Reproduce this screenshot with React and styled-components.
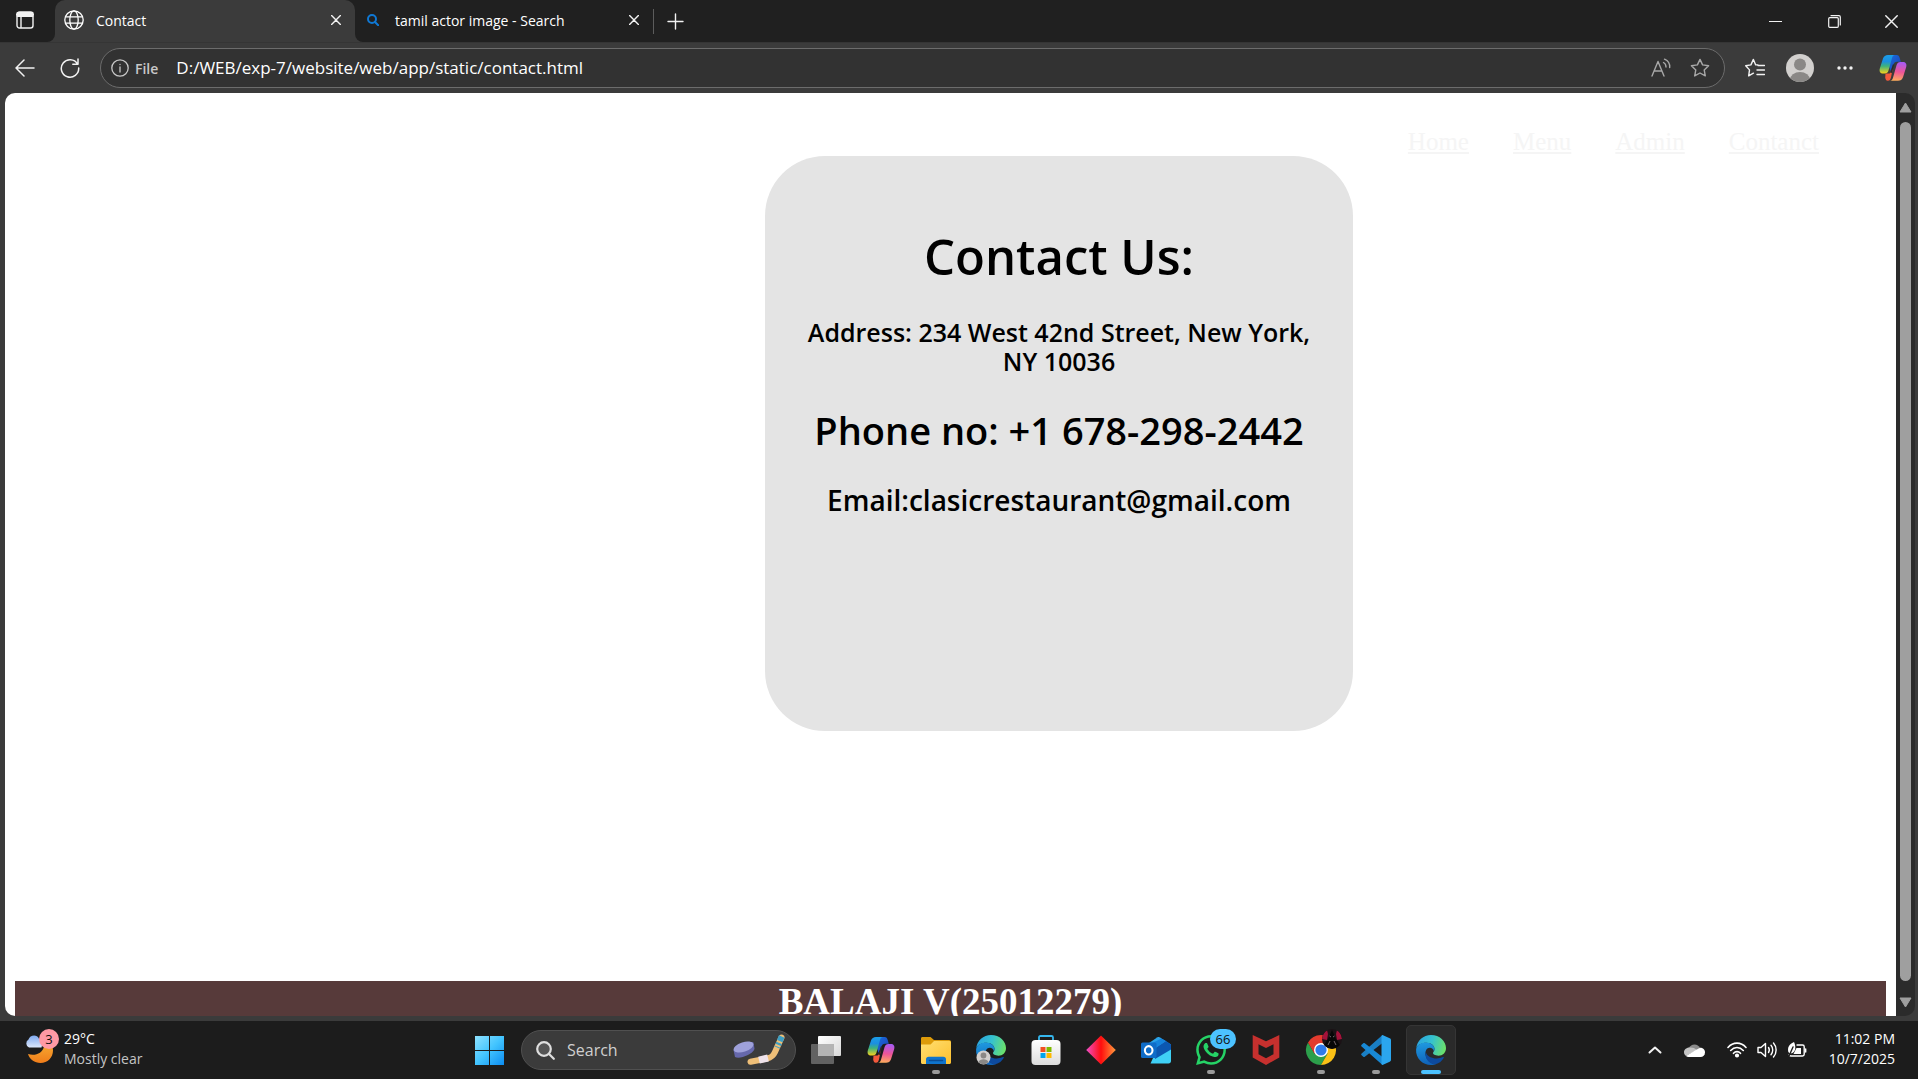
import React from "react";
import styled, { createGlobalStyle } from "styled-components";

const GlobalStyle = createGlobalStyle`
  *, *::before, *::after { box-sizing: border-box; }
  body { margin: 0; background: #3b3b3b; }
  button, input { font: inherit; color: inherit; }
`;

const ui = `"Segoe UI", "Open Sans", "Noto Sans", sans-serif`;

const Desktop = styled.div`
  display: flex;
  flex-direction: column;
  height: 100vh;
  overflow: hidden;
  font-family: ${ui};
  color: #fff;
  background: #3b3b3b;
`;

/* ---------- shared controls ---------- */
const IconButton = styled.button`
  display: flex;
  align-items: center;
  justify-content: center;
  flex: none;
  width: ${(p) => p.$w || 32}px;
  height: ${(p) => p.$h || 32}px;
  padding: 0;
  border: 0;
  background: none;
  color: ${(p) => p.$color || "#f2f2f2"};
  svg { display: block; }
`;

/* ---------- tab strip ---------- */
const TabStrip = styled.header`
  display: flex;
  align-items: center;
  flex: none;
  height: 42px;
  background: #202020;
`;

const TabActions = styled.div`
  display: flex;
  align-items: center;
  justify-content: center;
  align-self: stretch;
  width: 55px;
  padding: 0 6px 2px 0;
  background: #202020;
  border-bottom-right-radius: 8px;
`;

const Tab = styled.div`
  display: flex;
  align-items: center;
  align-self: stretch;
  width: ${(p) => p.$w}px;
  padding: 0 3px 2px ${(p) => p.$pad}px;
  gap: ${(p) => p.$gap}px;
  font-size: 14px;
  background: ${(p) => (p.$active ? "#3b3b3b" : "#202020")};
  border-radius: ${(p) => (p.$active ? "10px 10px 0 0" : "0 0 0 8px")};
`;

const Corner = styled.div`
  display: flex;
  align-self: stretch;
  background: linear-gradient(#202020 50%, #3b3b3b 50%);
`;

const TabTitle = styled.span`
  flex: 1;
  white-space: nowrap;
`;

const Separator = styled.div`
  width: 1px;
  height: 25px;
  background: #5c5c5c;
`;

const Spacer = styled.div`
  flex: 1;
`;

/* ---------- toolbar ---------- */
const Toolbar = styled.div`
  display: flex;
  align-items: center;
  flex: none;
  height: 51px;
  padding-left: 8px;
  border-top: 1px solid #353535;
`;

const AddressBar = styled.div`
  display: flex;
  align-items: center;
  flex: 1;
  height: 40px;
  margin: 0 7px 0 2px;
  padding: 0 4px 0 8px;
  border: 1px solid #6c6c6c;
  border-radius: 20px;
  background: #323232;
`;

const Scheme = styled.label`
  margin: 0 18px 0 4px;
  font-size: 14px;
  font-weight: 600;
  color: #c8c8c8;
`;

const AddressInput = styled.input`
  flex: 1;
  min-width: 0;
  padding: 0;
  border: 0;
  outline: 0;
  background: none;
  font-size: 17px;
  line-height: 24px;
`;

/* ---------- viewport ---------- */
const Viewport = styled.div`
  display: flex;
  flex: 1;
  min-height: 0;
  margin: 0 3px 5px 5px;
`;

const Page = styled.main`
  flex: 1;
  min-width: 0;
  overflow: hidden;
  padding: 34px 10px 0;
  border-radius: 10px 0 0 10px;
  background: #fff;
  color: #000;
  font-family: "Times New Roman", "Liberation Serif", serif;
`;

const Nav = styled.nav`
  display: flex;
  justify-content: flex-end;
  gap: 44px;
  padding-right: 67px;
  font-size: 25px;
  line-height: 29px;
  a { color: #f5f5f5; text-underline-offset: 2px; text-decoration-thickness: 2px; }
`;

const CardRow = styled.div`
  display: grid;
  grid-template-columns: 750fr 588px 533fr;
`;

const Card = styled.section`
  grid-column: 2;
  min-height: 575px;
  padding: 70px 40px;
  border-radius: 60px;
  background: #e4e4e4;
  text-align: center;
  font-family: "Trebuchet MS", "Open Sans", sans-serif;
`;

const CardLine = styled.p`
  margin: 0 0 ${(p) => p.$gap}px;
  font-size: ${(p) => p.$size}px;
  line-height: ${(p) => p.$line}px;
  font-weight: 600;
  white-space: ${(p) => (p.$nowrap ? "nowrap" : "normal")};
`;

const Footer = styled.footer`
  margin-top: 250px;
  padding-bottom: 20px;
  background: #573a3a;
  color: #fff;
  text-align: center;
  font-size: 37px;
  line-height: 42px;
  font-weight: 700;
`;

const ScrollTrack = styled.div`
  display: flex;
  flex-direction: column;
  align-items: center;
  width: 19px;
  padding: 9px 0 8px;
  border-radius: 0 10px 10px 0;
  background: #2b2b2b;
`;

const ScrollThumb = styled.div`
  flex: 1;
  width: 11px;
  margin: 9px 0 16px;
  border-radius: 6px;
  background: #9f9f9f;
`;

/* ---------- taskbar ---------- */
const Taskbar = styled.footer`
  display: grid;
  grid-template-columns: 1fr auto 1fr;
  align-items: center;
  flex: none;
  height: 58px;
  background: #1c1c1c;
`;

const Weather = styled.button`
  display: flex;
  align-items: center;
  justify-self: start;
  gap: 4px;
  height: 50px;
  margin-left: 24px;
  padding: 0 0 2px;
  border: 0;
  background: none;
  text-align: left;
  font-size: 14px;
  line-height: 20px;
  white-space: nowrap;
  small { display: block; font-size: 14px; color: #c4c4c4; }
`;

const Apps = styled.div`
  display: flex;
  align-items: center;
  gap: 5px;
  padding-left: 2px;
`;

const SearchBox = styled.label`
  display: flex;
  align-items: center;
  width: 275px;
  height: 40px;
  margin-left: 2px;
  padding: 0 10px 0 14px;
  gap: 12px;
  border: 1px solid #505050;
  border-radius: 20px;
  background: #3b3b3b;
`;

const SearchInput = styled.input`
  flex: 1;
  min-width: 0;
  padding: 0;
  border: 0;
  outline: 0;
  background: none;
  font-size: 16px;
  &::placeholder { color: #cfcfcf; opacity: 1; }
`;

const AppTile = styled.button`
  position: relative;
  display: flex;
  align-items: center;
  justify-content: center;
  width: 50px;
  height: 50px;
  padding: 0;
  border: 1px solid ${(p) => (p.$active ? "#353535" : "transparent")};
  border-radius: 5px;
  background: ${(p) => (p.$active ? "#2a2a2a" : "none")};
  svg { display: block; overflow: visible; }
  &::after {
    content: "";
    display: ${(p) => (p.$running || p.$active ? "block" : "none")};
    position: absolute;
    bottom: 0;
    left: 50%;
    width: ${(p) => (p.$active ? 20 : 8)}px;
    height: 4px;
    margin-left: ${(p) => (p.$active ? -10 : -4)}px;
    border-radius: 2px;
    background: ${(p) => (p.$active ? "#4cc2ff" : "#9a9a9a")};
  }
`;

const Badge = styled.span`
  position: absolute;
  top: 3px;
  right: -1px;
  width: 26px;
  height: 20px;
  border-radius: 10px;
  background: #4cc2ff;
  color: #111;
  font-size: 13px;
  line-height: 20px;
  text-align: center;
`;

const WeatherArt = styled.span`
  position: relative;
  display: block;
  width: 36px;
  height: 40px;
  svg { display: block; }
`;

const AlertBadge = styled.span`
  position: absolute;
  top: 0;
  right: 1px;
  width: 20px;
  height: 20px;
  border-radius: 50%;
  background: #ff99a4;
  color: #111;
  font-size: 13px;
  line-height: 20px;
  text-align: center;
`;

const Tray = styled.div`
  display: flex;
  align-items: center;
  justify-self: end;
  padding-right: 23px;
`;

const Quick = styled.button`
  display: flex;
  align-items: center;
  gap: 10px;
  padding: 0;
  margin: 0 22px 0 9px;
  border: 0;
  background: none;
`;

const Clock = styled.time`
  padding-bottom: 2px;
  text-align: right;
  font-size: 14px;
  line-height: 20px;
  white-space: nowrap;
`;

/* ---------- drawings ---------- */
const Stroke = ({ w = 20, h = w, vb, sw = 1.4, children, ...rest }) => (
  <svg width={w} height={h} viewBox={vb || `0 0 ${w} ${h}`} fill="none" stroke="currentColor"
    strokeWidth={sw} strokeLinecap="round" strokeLinejoin="round" aria-hidden="true" {...rest}>
    {children}
  </svg>
);

const CloseGlyph = ({ size = 10, sw = 1.4 }) => (
  <Stroke w={size} sw={sw} vb="0 0 10 10"><path d="M.6.6l8.8 8.8M9.4.6L.6 9.4" /></Stroke>
);

const Globe = () => (
  <Stroke w={20} sw={1.3}>
    <circle cx="10" cy="10" r="9.2" />
    <ellipse cx="10" cy="10" rx="4.2" ry="9.2" />
    <path d="M1.6 6.8h16.8M1.6 13.2h16.8" />
  </Stroke>
);

const starPath = "M10 1.4l2.6 5.5 6 .8-4.4 4.2 1.1 6L10 15l-5.3 2.9 1.1-6L1.4 7.7l6-.8z";

const Copilot = ({ id, w = 28 }) => (
  <svg width={w} height={w} viewBox="0 0 28 28" aria-hidden="true">
    <defs>
      <linearGradient id={`${id}a`} x1="0" y1="0" x2="0" y2="1">
        <stop offset="0" stopColor="#1b9ee8" /><stop offset=".35" stopColor="#1c8fe0" />
        <stop offset=".6" stopColor="#3db27c" /><stop offset="1" stopColor="#f6d21c" />
      </linearGradient>
      <linearGradient id={`${id}b`} x1=".3" y1="0" x2=".2" y2="1">
        <stop offset="0" stopColor="#a95af2" /><stop offset=".5" stopColor="#ee5597" />
        <stop offset="1" stopColor="#ffb05a" />
      </linearGradient>
      <linearGradient id={`${id}c`} x1="0" y1="0" x2="1" y2="1">
        <stop offset="0" stopColor="#1a6fe0" /><stop offset="1" stopColor="#1b3fb4" />
      </linearGradient>
    </defs>
    <path d="M11 1h6.500c2 0 2.700 1.300 3.200 3l1.100 3.700H18c-2 0-3 1-3.600 3L11.500 17 9 9z" fill={`url(#${id}c)`} />
    <path d="M6.500 19.500h4.200l3-5-1.700 9c-.6 2-1.200 3.300-3 3.300h-.500c-1.300 0-1.800-1-2.300-3z" fill="#f2593c" />
    <path d="M9 1h7c-1.600 0-2.500 1.200-3 3L9.500 16.500c-.7 2.200-1.700 3-3.700 3H4.200c-2.900 0-4.200-2-3.400-5L4 4.600C4.800 2.200 6.500 1 9 1z" fill={`url(#${id}a)`} />
    <path d="M19 26.800h-8c1.600 0 2.500-1.200 3-3l3.600-12.700c.7-2.200 1.800-3.200 3.800-3.200h2.400c2.900 0 4.200 2 3.400 5L24 23.200c-.8 2.400-2.500 3.600-5 3.600z" fill={`url(#${id}b)`} />
    <path d="M13.800 10.500h1.500l-2.600 8.500h-1.400z" fill="#2b2b2b" />
  </svg>
);

const EdgeLogo = ({ id, profile }) => (
  <svg width="30" height="30" viewBox="0 0 30 30" aria-hidden="true">
    <defs>
      <linearGradient id={`${id}a`} x1="0" y1=".3" x2="1" y2=".5">
        <stop offset="0" stopColor="#2aa4e0" /><stop offset=".5" stopColor="#35c1cf" /><stop offset="1" stopColor="#6be06a" />
      </linearGradient>
      <linearGradient id={`${id}b`} x1=".3" y1="0" x2=".4" y2="1">
        <stop offset="0" stopColor="#1f9ae0" /><stop offset="1" stopColor="#0f62b8" />
      </linearGradient>
    </defs>
    <path d="M.2 13.500C1 5.600 7.300 0 15 0c8.800 0 15 6.300 15 13 0 4.800-3.400 7.700-7.600 7.700-3.600 0-5.400-1.400-5.400-2.600 0-1 1.500-1.500 1.500-4 0-3.500-3.500-6.300-8-6.300C5.500 7.800 1.200 10 .2 13.500z" fill={`url(#${id}a)`} />
    <path d="M.1 14.500C.6 10.500 4.500 7.500 9.800 7.500c5 0 8.700 3 8.700 6.500 0 1-.2 1.800-.6 2.400-.4-2.400-2-3.700-4.200-3.700-3 0-4.700 3.300-4.200 7 .7 5 4.700 9 10.500 9.200C18.500 29.700 16.800 30 15 30 6.500 30-.5 23.200.1 14.500z" fill={`url(#${id}b)`} />
    <path d="M9.700 17c-1 6.500 3 12.300 9.800 12.300 3.700-1 6.500-3.300 8.200-6.300.4-.8-.2-1.200-.8-.9-5.500 2.800-15.200 1.500-17.200-5.100z" fill="#0d4a9e" />
    {profile && (
      <g>
        <circle cx="7.500" cy="22.500" r="7" fill="#d2d0ce" />
        <circle cx="7.500" cy="20.500" r="2.900" fill="#8a8886" />
        <path d="M2.500 27.200c.8-2.300 2.700-3 5-3s4.200.7 5 3a7 7 0 0 1-10 0z" fill="#8a8886" />
      </g>
    )}
  </svg>
);

const WeatherIcon = () => (
  <svg width="36" height="40" viewBox="0 0 36 40" aria-hidden="true">
    <defs>
      <linearGradient id="moon" x1="0" y1="0" x2="0" y2="1"><stop offset="0" stopColor="#f8b93a" /><stop offset="1" stopColor="#f07d1a" /></linearGradient>
      <linearGradient id="cld" x1="0" y1="0" x2="0" y2="1"><stop offset="0" stopColor="#7fa9ef" /><stop offset="1" stopColor="#dbe7fb" /></linearGradient>
    </defs>
    <path d="M20 8c5 1.500 9 6 9 13.500C29 28.500 23.500 34 16.500 34c-6 0-10.800-3.500-12.500-9 7 2.300 14.500-.5 16-7.500.6-3 .4-6.500 0-9.500z" fill="url(#moon)" />
    <path d="M5 18.500A4.500 4.500 0 0 1 4.500 10.500C5.500 6 13 4.500 15 9.700c3 .3 4 4.500 2.500 8.800z" fill="url(#cld)" />
  </svg>
);

const Hockey = () => (
  <svg width="52" height="32" viewBox="0 0 52 32" aria-hidden="true">
    <path d="M.6 16.500C2 12 15 6.300 20.500 8.500l1 6.500c-2 5.500-15 10.500-19.500 8z" fill="#6668ac" />
    <ellipse cx="10.500" cy="13" rx="10.300" ry="4.800" transform="rotate(-18 10.500 13)" fill="#9fa1da" />
    <path d="M48.500 3.500L42 18c-2 4.500-4 5.500-8 6.500l-16.500 3.300" fill="none" stroke="#efbf78" strokeWidth="6" strokeLinecap="round" strokeLinejoin="round" />
    <path d="M26 26.200l9-2.200" stroke="#eee2ea" strokeWidth="7" />
    <path d="M48.700 2.500l-4.500 11" stroke="#3d9fc4" strokeWidth="6" strokeDasharray="5 2 2 2" />
  </svg>
);

const apps = [
  { name: "Task view", icon: (
    <svg width="30" height="28" viewBox="0 0 30 28"><defs><linearGradient id="tv" x1="0" y1="0" x2="1" y2="1"><stop offset="0" stopColor="#fff" /><stop offset="1" stopColor="#d8d8d8" /></linearGradient></defs>
      <rect x="0" y="8" width="23" height="20" rx="1" fill="#626262" /><rect x="7" y="0" width="23" height="20" rx="1" fill="url(#tv)" /><path d="M7 8h16v12H8a1 1 0 0 1-1-1z" fill="#b4b4b4" /></svg>) },
  { name: "Copilot", icon: <Copilot id="tc" /> },
  { name: "File Explorer", running: true, icon: (
    <svg width="30" height="28" viewBox="0 0 30 28"><defs><linearGradient id="fx" x1="0" y1="0" x2="1" y2="1"><stop offset="0" stopColor="#ffdf73" /><stop offset="1" stopColor="#fdc02d" /></linearGradient></defs>
      <path d="M0 2.500C0 1.500.7 1 1.500 1h8l3.500 3H28c1.300 0 2 .7 2 2v5H0z" fill="#dd9b0a" /><path d="M0 8.500h9.500L13 5h15.500c.8 0 1.500.7 1.500 1.500v20c0 .8-.7 1.500-1.500 1.500h-27C.7 28 0 27.300 0 26.500z" fill="url(#fx)" />
      <path d="M5 28v-4.500c0-1.700 1-2.700 2.700-2.700h14.600c1.700 0 2.700 1 2.700 2.700V28z" fill="#0f74cc" /><path d="M8.500 24.500h13" stroke="#0a4c94" strokeWidth="1.500" strokeLinecap="round" /></svg>) },
  { name: "Microsoft Edge profile", icon: <EdgeLogo id="ep" profile /> },
  { name: "Microsoft Store", icon: (
    <svg width="30" height="30" viewBox="0 0 30 30"><defs><linearGradient id="ms" x1="0" y1="0" x2="0" y2="1"><stop offset="0" stopColor="#fff" /><stop offset="1" stopColor="#dcdcdc" /></linearGradient></defs>
      <path d="M8 6V2.500C8 1.500 8.500 1 9.500 1h11c1 0 1.500.5 1.500 1.500V6" fill="none" stroke="#35b7ee" strokeWidth="1.800" /><rect x=".5" y="5" width="29" height="25" rx="4" fill="url(#ms)" />
      <path d="M9.500 12h5v5h-5z" fill="#f25022" /><path d="M15.500 12h5v5h-5z" fill="#7fba00" /><path d="M9.500 18h5v5h-5z" fill="#00a4ef" /><path d="M15.500 18h5v5h-5z" fill="#ffb900" /></svg>) },
  { name: "Media app", icon: (
    <svg width="30" height="30" viewBox="0 0 30 30"><defs><linearGradient id="dm"><stop offset="0" stopColor="#f04fc8" /><stop offset=".5" stopColor="#ff0d0d" /><stop offset="1" stopColor="#ff9a3c" /></linearGradient></defs><path d="M15 .4L29.800 15 15 29.600.2 15z" fill="url(#dm)" /></svg>) },
  { name: "Outlook", icon: (
    <svg width="30" height="28" viewBox="0 0 30 28"><path d="M5 9L16.500 1.300c.8-.5 1.200-.5 2 0L30 8.500v9H5z" fill="#2aa3e8" /><path d="M12 22L30 12v13c0 1.500-1 2.500-2.500 2.500h-18z" fill="#3fd0f5" /><path d="M14 12L25 5l5 3.500v5L14 23z" fill="#0c57b0" /><path d="M8 8.500l12.500-6L25 5l-11 7.500z" fill="#1583dc" />
      <rect x="0" y="6.500" width="15.500" height="15.500" rx="1.500" fill="#0f6cc8" /><ellipse cx="7.700" cy="14.300" rx="3.800" ry="4.200" fill="none" stroke="#fff" strokeWidth="2.100" /></svg>) },
  { name: "WhatsApp", running: true, badge: "66", icon: (
    <svg width="30" height="30" viewBox="0 0 24 24" fill="#25d366"><path d="M17.472 14.382c-.297-.149-1.758-.867-2.030-.967-.273-.099-.471-.148-.67.150-.197.297-.767.966-.940 1.164-.173.199-.347.223-.644.075-.297-.150-1.255-.463-2.390-1.475-.883-.788-1.480-1.761-1.653-2.059-.173-.297-.018-.458.130-.606.134-.133.298-.347.446-.520.149-.174.198-.298.298-.497.099-.198.050-.371-.025-.520-.075-.149-.669-1.612-.916-2.207-.242-.579-.487-.500-.669-.510-.173-.008-.371-.010-.570-.010-.198 0-.520.074-.792.372-.272.297-1.040 1.016-1.040 2.479 0 1.462 1.065 2.875 1.213 3.074.149.198 2.096 3.200 5.077 4.487.709.306 1.262.489 1.694.625.712.227 1.360.195 1.871.118.571-.085 1.758-.719 2.006-1.413.248-.694.248-1.289.173-1.413-.074-.124-.272-.198-.570-.347m-5.421 7.403h-.004a9.870 9.870 0 01-5.031-1.378l-.361-.214-3.741.982.998-3.648-.235-.374a9.860 9.860 0 01-1.510-5.260c.001-5.450 4.436-9.884 9.888-9.884 2.640 0 5.122 1.030 6.988 2.898a9.825 9.825 0 012.893 6.994c-.003 5.450-4.437 9.884-9.885 9.884m8.413-18.297A11.815 11.815 0 0012.050 0C5.495 0 .160 5.335.157 11.892c0 2.096.547 4.142 1.588 5.945L.057 24l6.305-1.654a11.882 11.882 0 005.683 1.448h.005c6.554 0 11.890-5.335 11.893-11.893a11.821 11.821 0 00-3.480-8.413z" /></svg>) },
  { name: "McAfee", icon: (
    <svg width="28" height="30" viewBox="0 0 28 30"><path d="M.7 0L14 6.300 27.300 0v22.500L14 30 .7 22.500zM6.500 9.300v9.900l7.500 4 7.500-4V9.300L14 13z" fill="#c6302e" fillRule="evenodd" /></svg>) },
  { name: "Google Chrome", running: true, icon: (
    <svg width="30" height="30" viewBox="0 0 30 30"><clipPath id="pf"><circle cx="26" cy="4" r="10" /></clipPath><path d="M15 15l-6.500 3.700L2 7.500A15 15 0 0 0 15 30l6.500-11.300z" fill="#2c9f4b" /><path d="M15 8h13.300A15 15 0 0 1 15 30l6.500-11.300z" fill="#fbc116" />
      <path d="M2 7.500A15 15 0 0 1 28.300 8H15L8.500 18.700z" fill="#e33b2e" /><circle cx="15" cy="15" r="7" fill="#fff" /><circle cx="15" cy="15" r="5.600" fill="#2f7bea" />
      <g clipPath="url(#pf)"><path d="M16-6h20v20H16z" fill="#1c1216" /><path d="M16 4c0-3 2-7 5-9l1 4-1 6zM36 4c0-3-2-7-5-9l-1 4 1 6z" fill="#a3123a" /><path d="M26-5l4 9 4 6c-4 5-12 5-16 0l4-6z" fill="#070707" /><path d="M23.500 1l1.500 1M28.500 1L27 2M24 6l-2 4M28 6l2 4" stroke="#77696d" strokeWidth="1" /></g></svg>) },
  { name: "Visual Studio Code", running: true, icon: (
    <svg width="30" height="30" viewBox="0 0 30 30"><path d="M21.500 0v8L3.800 21.700c-.5.400-1 .4-1.500 0L.6 20.200c-.6-.6-.6-1.300 0-1.800z" fill="#1a7fc4" /><path d="M21.500 30v-8L3.800 8.300c-.5-.4-1-.4-1.500 0L.6 9.800c-.6.600-.6 1.300 0 1.800z" fill="#1888d4" /><path d="M21.500 0l7.200 3.300c.9.400 1.300 1 1.300 1.900v19.600c0 .9-.4 1.500-1.300 1.900L21.500 30c-.8-.4-1-1-1-2V2c0-1 .2-1.600 1-2z" fill="#2ba6ee" /></svg>) },
  { name: "Microsoft Edge", active: true, icon: <EdgeLogo id="ed" /> },
];

export default function App() {
  return (
    <Desktop>
      <GlobalStyle />
      <TabStrip>
        <Corner>
          <TabActions>
            <IconButton aria-label="Tab actions">
              <Stroke w={18}><rect x="1" y="1" width="16" height="16" rx="2.500" /><path d="M1 3.500h16M1.500 2h15M1.500 5h15" strokeWidth="2" /><path d="M5 6v10.500" /></Stroke>
            </IconButton>
          </TabActions>
        </Corner>
        <Tab $active $w={300} $pad={9} $gap={12}>
          <Globe />
          <TabTitle>Contact</TabTitle>
          <IconButton aria-label="Close Contact tab"><CloseGlyph /></IconButton>
        </Tab>
        <Corner>
          <Tab $w={298} $pad={12} $gap={16}>
            <Stroke w={12} sw={2} color="#0f78d4"><circle cx="5" cy="5" r="4" /><path d="M8 8l3.200 3.200" /></Stroke>
            <TabTitle>tamil actor image - Search</TabTitle>
            <IconButton aria-label="Close Search tab"><CloseGlyph /></IconButton>
          </Tab>
        </Corner>
        <Separator />
        <IconButton $w={42} aria-label="New tab"><Stroke w={17}><path d="M8.500 1v15M1 8.500h15" /></Stroke></IconButton>
        <Spacer />
        <IconButton $w={58} aria-label="Minimize"><Stroke w={13} sw={1.200}><path d="M0 6.500h13" /></Stroke></IconButton>
        <IconButton $w={60} aria-label="Restore"><Stroke w={13} sw={1.200}><rect x=".7" y="2.700" width="9.600" height="9.600" rx="1" /><path d="M3 .7h8c.9 0 1.300.5 1.300 1.300V10" /></Stroke></IconButton>
        <IconButton $w={54} aria-label="Close window"><CloseGlyph size={13} sw={1.100} /></IconButton>
      </TabStrip>

      <Toolbar>
        <IconButton $w={34} aria-label="Back"><Stroke w={20} sw={1.500}><path d="M19 10H1M9 2L1 10l8 8" /></Stroke></IconButton>
        <IconButton $w={56} aria-label="Refresh"><Stroke w={20} sw={1.500}><path d="M17.500 6A8.700 8.700 0 1 0 18.700 10M18 1v5.200h-5.200" /></Stroke></IconButton>
        <AddressBar>
          <IconButton $w={22} $color="#c8c8c8" aria-label="Site information"><Stroke w={18} sw={1.300}><circle cx="9" cy="9" r="8.200" /><path d="M9 8v5M9 5.300v.2" /></Stroke></IconButton>
          <Scheme htmlFor="address">File</Scheme>
          <AddressInput id="address" defaultValue="D:/WEB/exp-7/website/web/app/static/contact.html" />
          <IconButton $w={38} $color="#a8a8a8" aria-label="Read aloud"><Stroke w={20} h={20}><path d="M1 18L7 3.500 13 18M3 13h8M12.500 4.500c1.800 1 2.500 2.700 2.500 4.500M13.500 1.200c3.500 1.600 5.500 4.800 5.200 8.300" /></Stroke></IconButton>
          <IconButton $w={40} $color="#a8a8a8" aria-label="Add to favorites"><Stroke w={20}><path d={starPath} /></Stroke></IconButton>
        </AddressBar>
        <IconButton $w={46} aria-label="Favorites"><Stroke w={20}><path d="M13 6.900l-2.300 0L8.400 1.400 5.900 6.900l-5.200.8 3.800 4.200-.8 6 4.700-2.700M13 7.500h6.500M12 12h7.500M12 16.500h7.500" /></Stroke></IconButton>
        <IconButton $w={44} aria-label="Profile">
          <svg width="28" height="28" viewBox="0 0 28 28"><clipPath id="av"><circle cx="14" cy="14" r="14" /></clipPath><g clipPath="url(#av)"><path d="M0 0h28v28H0z" fill="#d2d0ce" /><circle cx="14" cy="10.500" r="6" fill="#8a8886" /><ellipse cx="14" cy="26" rx="10" ry="8" fill="#8a8886" /></g></svg>
        </IconButton>
        <IconButton $w={46} aria-label="Settings and more"><svg width="16" height="4" fill="currentColor"><circle cx="2" cy="2" r="1.700" /><circle cx="8" cy="2" r="1.700" /><circle cx="14" cy="2" r="1.700" /></svg></IconButton>
        <IconButton $w={50} aria-label="Copilot"><Copilot id="bc" /></IconButton>
      </Toolbar>

      <Viewport>
        <Page>
          <Nav>
            <a href="#home">Home</a>
            <a href="#menu">Menu</a>
            <a href="#admin">Admin</a>
            <a href="#contact">Contanct</a>
          </Nav>
          <CardRow>
            <Card>
              <CardLine as="h1" $size={49} $line={60} $gap={32}>Contact Us:</CardLine>
              <CardLine $size={25} $line={29} $gap={32}>Address: 234 West 42nd Street, New York, NY 10036</CardLine>
              <CardLine as="h2" $size={38} $line={44} $gap={32} $nowrap>Phone no: +1 678-298-2442</CardLine>
              <CardLine as="h3" $size={28} $line={32} $gap={0} $nowrap>Email:clasicrestaurant@gmail.com</CardLine>
            </Card>
          </CardRow>
          <Footer>BALAJI V(25012279)</Footer>
        </Page>
        <ScrollTrack>
          <svg width="13" height="11" aria-hidden="true"><path d="M6.500 1L12 10H1z" fill="#9f9f9f" stroke="#9f9f9f" strokeLinejoin="round" /></svg>
          <ScrollThumb />
          <svg width="13" height="11" aria-hidden="true"><path d="M6.500 10L12 1H1z" fill="#9f9f9f" stroke="#9f9f9f" strokeLinejoin="round" /></svg>
        </ScrollTrack>
      </Viewport>

      <Taskbar>
        <Weather>
          <WeatherArt><WeatherIcon /><AlertBadge>3</AlertBadge></WeatherArt>
          <span>29°C<small>Mostly clear</small></span>
        </Weather>
        <Apps>
          <AppTile aria-label="Start">
            <svg width="29" height="29" viewBox="0 0 29 29"><defs><linearGradient id="st" x1="0" y1="0" x2="29" y2="29" gradientUnits="userSpaceOnUse"><stop offset="0" stopColor="#8fe2ff" /><stop offset=".5" stopColor="#42c4ff" /><stop offset="1" stopColor="#0c8cf0" /></linearGradient></defs><path d="M0 0h14v14H0zM15 0h14v14H15zM0 15h14v14H0zM15 15h14v14H15z" fill="url(#st)" /></svg>
          </AppTile>
          <SearchBox>
            <Stroke w={19} sw={2.200} color="#dedede"><circle cx="8" cy="8" r="6.800" fill="#555" /><path d="M13 13l4.800 4.800" /></Stroke>
            <SearchInput placeholder="Search" aria-label="Search" />
            <Hockey />
          </SearchBox>
          {apps.map((a) => (
            <AppTile key={a.name} aria-label={a.name} $running={a.running} $active={a.active}>
              {a.icon}
              {a.badge && <Badge>{a.badge}</Badge>}
            </AppTile>
          ))}
        </Apps>
        <Tray>
          <IconButton $w={34} aria-label="Show hidden icons"><Stroke w={14} h={8} sw={2}><path d="M1.500 6.500L7 1.500l5.500 5" /></Stroke></IconButton>
          <IconButton $w={46} aria-label="OneDrive">
            <svg width="21" height="14" viewBox="0 0 21 14"><path d="M5 5a6 6 0 0 1 11 0l-5 4z" fill="#8b8b8b" /><path d="M5.500 4.500C2 4.500 0 7 0 9.200 0 11 1 12 2 13l11-6C11 5 8 4.300 5.500 4.500z" fill="#c3c3c3" /><path d="M2 13l9-5.500 5-2.700c3 0 5 2 5 4.700 0 2.500-2 4.500-4.500 4.500H4.500c-1 0-1.800-.4-2.500-1z" fill="#fff" /></svg>
          </IconButton>
          <Quick aria-label="Network, volume and battery">
            <Stroke w={20} h={16} sw={1.600}><path d="M1 5.500C6-.3 14-.3 19 5.500M3.700 8.500c3.700-4 8.900-4 12.600 0M6.500 11.300c2-2.200 5-2.200 7 0" /><circle cx="10" cy="13.500" r="1.300" fill="currentColor" /></Stroke>
            <Stroke w={20} h={18} sw={1.400}><path d="M1 6.500h3l4.500-4v13L4 11.500H1zM11.500 6.500c1 1.500 1 3.500 0 5M14 4.300c2.300 2.700 2.300 6.700 0 9.400M16.500 2c3.500 4 3.500 10 0 14" /></Stroke>
            <Stroke w={20} h={18} sw={1.400}><path d="M10 4h5.500c1 0 1.700.7 1.700 1.700v7.600c0 1-.7 1.700-1.700 1.700H4c-1 0-1.700-.5-1.700-1.500M18.700 8v3" /><path d="M1 9c0-4 2-6 6-8 1.500 3 2.500 9-1.500 11C3 13 1 12 1 9z" fill="currentColor" stroke="none" /><path d="M2 15L6 6" stroke="#1c1c1c" /><path d="M9.500 7H14v6H6.500z" fill="currentColor" stroke="none" /></Stroke>
          </Quick>
          <Clock>11:02 PM<br />10/7/2025</Clock>
        </Tray>
      </Taskbar>
    </Desktop>
  );
}
